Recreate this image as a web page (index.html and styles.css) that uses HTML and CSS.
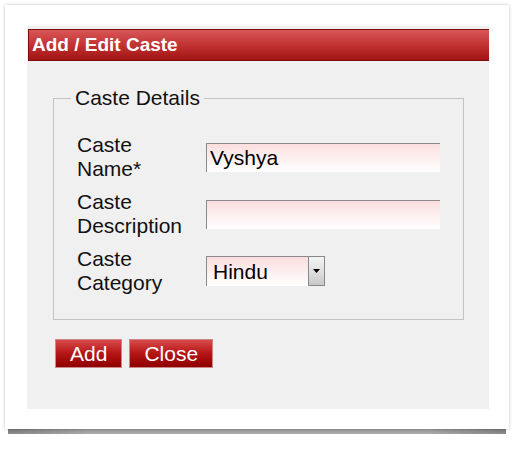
FILE: index.html
```html
<!DOCTYPE html>
<html lang="en">
<head>
    <meta charset="UTF-8">
    <title>Add / Edit Caste</title>
    <link rel="stylesheet" href="styles.css">
</head>
<body>
    <div class="frame">
        <div class="panel">
            <h1 class="panel-title">Add / Edit Caste</h1>
            <fieldset class="details">
                <legend>Caste Details</legend>
                <div class="form-grid">
                    <label for="caste-name">Caste<br>Name*</label>
                    <input id="caste-name" class="text-input" type="text" value="Vyshya">

                    <label for="caste-desc">Caste<br>Description</label>
                    <input id="caste-desc" class="text-input" type="text" value="">

                    <label for="caste-cat">Caste<br>Category</label>
                    <div class="select-box">
                        <select id="caste-cat">
                            <option>Hindu</option>
                            <option>Muslim</option>
                            <option>Christian</option>
                        </select>
                        <span class="select-btn">
                            <svg width="7" height="4" viewBox="0 0 7 4"><path d="M0 0h7L3.5 4z" fill="#000"/></svg>
                        </span>
                    </div>
                </div>
            </fieldset>
            <div class="actions">
                <button class="red-btn">Add</button>
                <button class="red-btn">Close</button>
            </div>
        </div>
    </div>
</body>
</html>
```

FILE: styles.css
```css
body {
    margin: 0;
    background: #fff;
    font-family: 'Liberation Sans', Arial, sans-serif;
    color: #111;
}
.frame {
    position: relative;
    margin: 5px;
    width: 504px;
    box-sizing: border-box;
    padding: 21px 20px 20px 22px;
    background: #fff;
    box-shadow: 0 0 3px rgba(0, 0, 0, 0.25);
}
/* soft curled shadow under the frame */
.frame::after {
    content: '';
    position: absolute;
    top: 100%;
    left: 3px;
    right: 3px;
    height: 24px;
    background:
        radial-gradient(ellipse 16% 100% at 0 0, rgba(0, 0, 0, 0.22), rgba(0, 0, 0, 0)),
        radial-gradient(ellipse 16% 100% at 100% 0, rgba(0, 0, 0, 0.22), rgba(0, 0, 0, 0)),
        linear-gradient(rgba(0, 0, 0, 0.4), rgba(0, 0, 0, 0.3) 30%, rgba(0, 0, 0, 0.15) 60%, rgba(0, 0, 0, 0.04) 85%, rgba(0, 0, 0, 0));
}
.panel {
    background: #f0f0f0;
    padding: 3px 0 41px 1px;
}
.panel-title {
    margin: 0;
    height: 30px;
    line-height: 30px;
    padding-left: 3px;
    font-size: 19px;
    font-weight: bold;
    color: #fff;
    background: linear-gradient(#d85656 0%, #c23333 50%, #a11414 100%);
    border: 1px solid #7c0d0d;
    border-right: none;
}
.details {
    margin: 26px 25px 0 25px;
    padding: 24px 23px 24px 23px;
    border: 1px solid #c3c3c3;
}
.details legend {
    margin-left: -6px;
    padding: 0 4px;
    font-size: 21px;
    line-height: 22px;
}
.form-grid {
    display: grid;
    grid-template-columns: 129px 234px;
    row-gap: 9px;
    align-items: center;
}
.form-grid label {
    font-size: 21px;
    line-height: 24px;
}
.text-input {
    box-sizing: border-box;
    width: 234px;
    height: 29px;
    margin: 0;
    padding: 0 3px;
    font-family: inherit;
    font-size: 21px;
    color: #000;
    border: none;
    border-top: 1px solid #8a8a8a;
    border-left: 1px solid #8a8a8a;
    background: linear-gradient(#fbdede 0%, #fff 100%);
    outline: none;
}
.select-box {
    display: flex;
    width: 119px;
    height: 30px;
    box-sizing: border-box;
    border-top: 1px solid #8a8a8a;
    border-left: 1px solid #8a8a8a;
    background: linear-gradient(#fbdede 0%, #fff 100%);
}
.select-box select {
    flex: 1;
    min-width: 0;
    appearance: none;
    -webkit-appearance: none;
    border: none;
    background: transparent;
    padding: 0 0 0 6px;
    font-family: inherit;
    font-size: 21px;
    color: #000;
    outline: none;
}
.select-btn {
    width: 17px;
    box-sizing: border-box;
    border: 1px solid #888;
    border-top: none;
    background: linear-gradient(#f4f4f4 0%, #dcdcdc 60%, #c8c8c8 100%);
    display: flex;
    align-items: center;
    justify-content: center;
}
.actions {
    display: flex;
    gap: 7px;
    margin: 19px 0 0 27px;
}
.red-btn {
    height: 29px;
    padding: 0 14px;
    font-family: inherit;
    font-size: 21px;
    color: #fff;
    border: 1px solid #c88;
    background: linear-gradient(#d94a4a 0%, #b51515 50%, #8e0000 100%);
    cursor: pointer;
}
```
